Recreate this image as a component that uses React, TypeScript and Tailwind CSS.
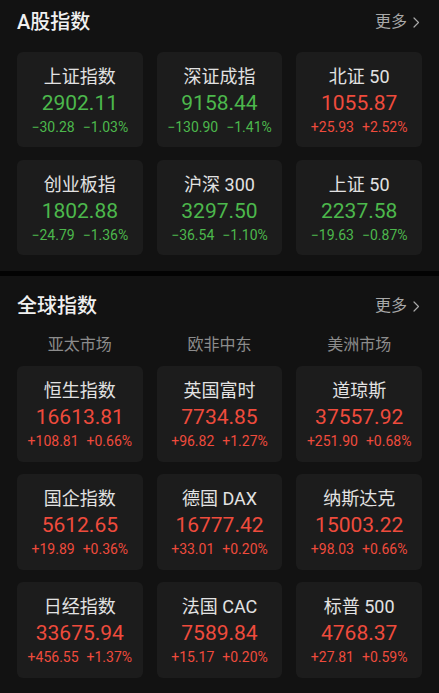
import React from "react";

type Item = { name: string; value: string; chg: string; pct: string; up: boolean };

const aItems: Item[] = [
  { name: "上证指数", value: "2902.11", chg: "−30.28", pct: "−1.03%", up: false },
  { name: "深证成指", value: "9158.44", chg: "−130.90", pct: "−1.41%", up: false },
  { name: "北证 50", value: "1055.87", chg: "+25.93", pct: "+2.52%", up: true },
  { name: "创业板指", value: "1802.88", chg: "−24.79", pct: "−1.36%", up: false },
  { name: "沪深 300", value: "3297.50", chg: "−36.54", pct: "−1.10%", up: false },
  { name: "上证 50", value: "2237.58", chg: "−19.63", pct: "−0.87%", up: false },
];

const gItems: Item[] = [
  { name: "恒生指数", value: "16613.81", chg: "+108.81", pct: "+0.66%", up: true },
  { name: "英国富时", value: "7734.85", chg: "+96.82", pct: "+1.27%", up: true },
  { name: "道琼斯", value: "37557.92", chg: "+251.90", pct: "+0.68%", up: true },
  { name: "国企指数", value: "5612.65", chg: "+19.89", pct: "+0.36%", up: true },
  { name: "德国 DAX", value: "16777.42", chg: "+33.01", pct: "+0.20%", up: true },
  { name: "纳斯达克", value: "15003.22", chg: "+98.03", pct: "+0.66%", up: true },
  { name: "日经指数", value: "33675.94", chg: "+456.55", pct: "+1.37%", up: true },
  { name: "法国 CAC", value: "7589.84", chg: "+15.17", pct: "+0.20%", up: true },
  { name: "标普 500", value: "4768.37", chg: "+27.81", pct: "+0.59%", up: true },
];

function Card({ it, h }: { it: Item; h: string }) {
  const color = it.up ? "text-[#ef4b3c]" : "text-[#4cb84c]";
  return (
    <div className={`flex flex-col items-center rounded-[6px] bg-[#1c1c1c] pt-[14px] ${h}`}>
      <div className="text-[18px] leading-[22px] text-[#e2e2e2]">{it.name}</div>
      <div className={`mt-[2px] text-[21px] leading-[26px] ${color}`}>{it.value}</div>
      <div className={`mt-[2px] flex gap-[8px] text-[14px] leading-[18px] ${color}`}>
        <span>{it.chg}</span>
        <span>{it.pct}</span>
      </div>
    </div>
  );
}

function More() {
  return (
    <div className="flex items-center gap-[5px] text-[16px] text-[#a8a8a8]">
      <span>更多</span>
      <svg width="8" height="13" viewBox="0 0 8 13" fill="none">
        <path d="M2 2l4.5 4.5L2 11" stroke="#a8a8a8" strokeWidth="1.2" strokeLinecap="round" strokeLinejoin="round" />
      </svg>
    </div>
  );
}

export default function App() {
  return (
    <div
      className="w-[439px] h-[693px] overflow-hidden bg-[#121212]"
      style={{ fontFamily: "Roboto, 'Noto Sans CJK SC', sans-serif" }}
    >
      <div className="px-[17px] pb-[16px]">
        <div className="flex h-[44px] items-center justify-between pr-[2px]">
          <div className="text-[20px] font-medium text-[#f0f0f0]">A股指数</div>
          <More />
        </div>
        <div className="mt-[8px] grid grid-cols-3 gap-x-[14px] gap-y-[13px]">
          {aItems.map((it) => (
            <Card key={it.name} it={it} h="h-[95px]" />
          ))}
        </div>
      </div>
      <div className="h-[5px] bg-[#030303]" />
      <div className="px-[17px]">
        <div className="flex h-[60px] items-center justify-between pr-[2px]">
          <div className="text-[20px] font-medium text-[#f0f0f0]">全球指数</div>
          <More />
        </div>
        <div className="grid grid-cols-3 gap-x-[14px] text-[16px] leading-[18px] text-[#8c8c8c]">
          <div className="text-center">亚太市场</div>
          <div className="text-center">欧非中东</div>
          <div className="text-center">美洲市场</div>
        </div>
        <div className="mt-[12px] grid grid-cols-3 gap-x-[14px] gap-y-[12px]">
          {gItems.map((it) => (
            <Card key={it.name} it={it} h="h-[96px]" />
          ))}
        </div>
      </div>
    </div>
  );
}
